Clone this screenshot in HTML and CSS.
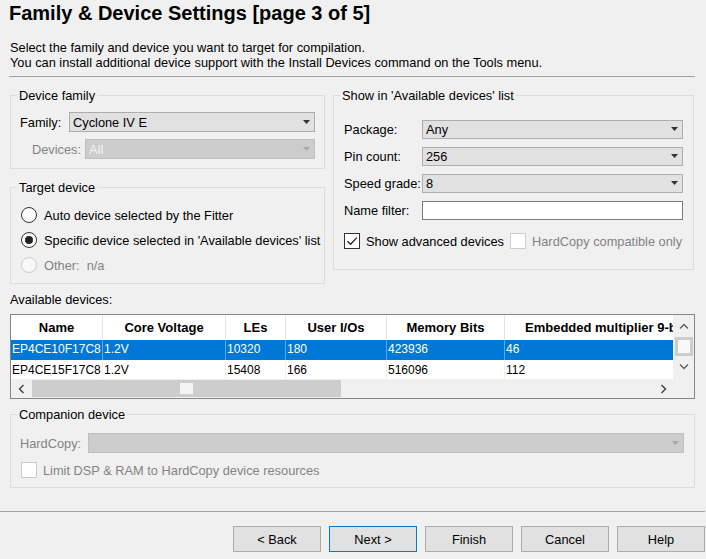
FILE: index.html
```html
<!DOCTYPE html>
<html>
<head>
<meta charset="utf-8">
<link rel="stylesheet" href="styles.css">
</head>
<body>
<div class="page">
  <h1 class="title">Family &amp; Device Settings [page 3 of 5]</h1>
  <p class="desc">Select the family and device you want to target for compilation.<br>You can install additional device support with the Install Devices command on the Tools menu.</p>
  <div class="rule"></div>

  <div class="top">
    <div class="left">
      <fieldset class="group g-family">
        <legend>Device family</legend>
        <div class="inner in-family">
          <div class="row row-family">
            <span class="lbl">Family:</span>
            <div class="combo"><span>Cyclone IV E</span><svg class="arr" width="7" height="4" viewBox="0 0 7 4"><path d="M0 0H7L3.5 4Z"/></svg></div>
          </div>
          <div class="row row-devices">
            <span class="lbl dis">Devices:</span>
            <div class="combo disabled"><span>All</span><svg class="arr" width="7" height="4" viewBox="0 0 7 4"><path d="M0 0H7L3.5 4Z"/></svg></div>
          </div>
        </div>
      </fieldset>

      <fieldset class="group g-target">
        <legend>Target device</legend>
        <div class="inner in-target">
          <div class="opt"><span class="radio"></span><span>Auto device selected by the Fitter</span></div>
          <div class="opt"><span class="radio on"></span><span>Specific device selected in 'Available devices' list</span></div>
          <div class="opt dis"><span class="radio off"></span><span>Other:&nbsp; n/a</span></div>
        </div>
      </fieldset>
    </div>

    <fieldset class="group g-show">
      <legend>Show in 'Available devices' list</legend>
      <div class="inner in-show">
        <div class="frow"><span class="flbl">Package:</span><div class="combo"><span>Any</span><svg class="arr" width="7" height="4" viewBox="0 0 7 4"><path d="M0 0H7L3.5 4Z"/></svg></div></div>
        <div class="frow"><span class="flbl">Pin count:</span><div class="combo"><span>256</span><svg class="arr" width="7" height="4" viewBox="0 0 7 4"><path d="M0 0H7L3.5 4Z"/></svg></div></div>
        <div class="frow"><span class="flbl">Speed grade:</span><div class="combo"><span>8</span><svg class="arr" width="7" height="4" viewBox="0 0 7 4"><path d="M0 0H7L3.5 4Z"/></svg></div></div>
        <div class="frow"><span class="flbl">Name filter:</span><div class="textbox"></div></div>
        <div class="chkrow">
          <span class="chk"><svg width="14" height="14" viewBox="0 0 14 14"><path d="M2.5 7.2L5.6 10.3L11.8 3.6" fill="none" stroke="#222" stroke-width="1.3"/></svg></span>
          <span>Show advanced devices</span>
          <span class="chk off hc"></span>
          <span class="dis">HardCopy compatible only</span>
        </div>
      </div>
    </fieldset>
  </div>

  <div class="avail">Available devices:</div>
  <div class="list">
    <div class="list-main">
      <div class="thead">
        <div class="th">Name</div>
        <div class="th">Core Voltage</div>
        <div class="th">LEs</div>
        <div class="th">User I/Os</div>
        <div class="th">Memory Bits</div>
        <div class="th th-last">Embedded multiplier 9-bit elements</div>
      </div>
      <div class="tr sel">
        <div class="td">EP4CE10F17C8</div>
        <div class="td">1.2V</div>
        <div class="td">10320</div>
        <div class="td">180</div>
        <div class="td">423936</div>
        <div class="td">46</div>
      </div>
      <div class="tr r2">
        <div class="td">EP4CE15F17C8</div>
        <div class="td">1.2V</div>
        <div class="td">15408</div>
        <div class="td">166</div>
        <div class="td">516096</div>
        <div class="td">112</div>
      </div>
    </div>
    <div class="vscroll">
      <div class="sbtn"><svg width="10" height="6" viewBox="0 0 10 6"><path d="M1 5.5L5 1.5L9 5.5" fill="none" stroke="#606060" stroke-width="1.4"/></svg></div>
      <div class="vthumb"></div>
      <div class="sbtn"><svg width="10" height="6" viewBox="0 0 10 6"><path d="M1 0.5L5 4.5L9 0.5" fill="none" stroke="#606060" stroke-width="1.4"/></svg></div>
    </div>
    <div class="hscroll">
      <div class="hbtn"><svg width="6" height="10" viewBox="0 0 6 10"><path d="M5.5 1L1.5 5L5.5 9" fill="none" stroke="#404040" stroke-width="1.4"/></svg></div>
      <div class="htrack"><div class="hthumb"><span class="grip"></span></div></div>
      <div class="hbtn"><svg width="6" height="10" viewBox="0 0 6 10"><path d="M0.5 1L4.5 5L0.5 9" fill="none" stroke="#404040" stroke-width="1.4"/></svg></div>
      <div class="corner"></div>
    </div>
  </div>

  <fieldset class="group g-comp">
    <legend>Companion device</legend>
    <div class="inner in-comp">
      <div class="row row-hc">
        <span class="lbl dis">HardCopy:</span>
        <div class="combo disabled"><span></span><svg class="arr" width="7" height="4" viewBox="0 0 7 4"><path d="M0 0H7L3.5 4Z"/></svg></div>
      </div>
      <div class="chkrow2">
        <span class="chk off"></span>
        <span class="dis">Limit DSP &amp; RAM to HardCopy device resources</span>
      </div>
    </div>
  </fieldset>

  <div class="rule2"></div>
  <div class="buttons">
    <div class="btn">&lt; Back</div>
    <div class="btn def">Next &gt;</div>
    <div class="btn">Finish</div>
    <div class="btn">Cancel</div>
    <div class="btn">Help</div>
  </div>
</div>
</body>
</html>
```

FILE: styles.css
```css
* { box-sizing: border-box; }
html, body { margin: 0; padding: 0; }
body {
  width: 706px;
  height: 559px;
  overflow: hidden;
  background: #f0f0f0;
  font-family: "Liberation Sans", Arial, sans-serif;
  font-size: 12.8px;
  color: #000;
}
.page { display: flex; flex-direction: column; height: 559px; }

.title {
  margin: 0;
  padding-left: 9px;
  font-size: 20px;
  font-weight: bold;
  line-height: 26px;
  height: 26px;
}
.desc { margin: 14px 0 0 10px; line-height: 15px; }
.rule { margin: 6px 11px 0 9px; height: 1px; background: #a0a0a0; }

.top { display: flex; gap: 8px; margin: 11px 0 0 10px; align-items: flex-start; }
.left { width: 315px; display: flex; flex-direction: column; gap: 11px; }

.group {
  margin: 0;
  padding: 0;
  min-width: 0;
  border: 1px solid #dcdcdc;
}
.group legend {
  margin-left: 6px;
  padding: 0 2px;
  line-height: 15px;
  height: 15px;
}

.in-family { padding: 9px 9px 9px 0; }
.row { display: flex; align-items: center; height: 20px; }
.row .combo { flex: 1; }
.row-family { padding-left: 9px; }
.row-family .lbl { width: 49px; }
.row-devices { margin-top: 7px; padding-left: 21px; }
.row-devices .lbl { width: 53px; }
.lbl { white-space: nowrap; flex: none; }
.dis { color: #838383; }

.combo {
  height: 20px;
  background: #e1e1e1;
  border: 1px solid #adadad;
  display: flex;
  align-items: center;
  justify-content: space-between;
  padding: 0 4px 0 3px;
  white-space: nowrap;
}
.combo .arr { fill: #333; flex: none; }
.combo.disabled { background: #cccccc; border-color: #bfbfbf; color: #f4f4f4; }
.combo.disabled .arr { fill: #a8a8a8; }

.in-target { padding: 10px 0 8px 10px; }
.opt { display: flex; align-items: center; gap: 7px; height: 20px; white-space: nowrap; }
.opt + .opt { margin-top: 5px; }
.radio {
  width: 16px; height: 16px;
  border-radius: 50%;
  border: 1px solid #333;
  background: #fff;
  position: relative;
  flex: none;
}
.radio.on::after {
  content: "";
  position: absolute;
  left: 3px; top: 3px;
  width: 8px; height: 8px;
  border-radius: 50%;
  background: #222;
}
.radio.off { border-color: #cccccc; background: #f8f8f8; }

.g-show { width: 361px; }
.in-show { padding: 16px 10px 18px 10px; }
.frow { display: flex; align-items: center; height: 20px; }
.frow + .frow { margin-top: 7px; }
.frow .combo { flex: 1; height: 19px; }
.flbl { width: 78px; flex: none; white-space: nowrap; }
.textbox { flex: 1; height: 19px; background: #fff; border: 1px solid #7a7a7a; }
.chkrow { display: flex; align-items: center; height: 20px; margin-top: 11px; gap: 6px; white-space: nowrap; }
.chk {
  width: 16px; height: 16px;
  border: 1px solid #333;
  background: #fff;
  flex: none;
  display: flex; align-items: center; justify-content: center;
}
.chk.off { border-color: #cccccc; }
.chk.hc { margin-left: 0; }

.avail { margin: 8px 0 0 10px; line-height: 15px; }

.list {
  margin: 7px 0 0 10px;
  width: 685px;
  height: 85px;
  border: 1px solid #828790;
  background: #fff;
  display: grid;
  grid-template-columns: 662px 21px;
  grid-template-rows: 64px 19px;
}
.list-main { overflow: hidden; }
.thead, .tr {
  display: grid;
  grid-template-columns: 92px 123px 60px 101px 118px 168px;
}
.thead { height: 25px; }
.th {
  font-weight: bold;
  font-size: 13px;
  text-align: center;
  line-height: 26px;
  height: 25px;
  border-right: 1px solid #e5e5e5;
  white-space: nowrap;
  overflow: hidden;
}
.th-last { text-align: left; padding-left: 20px; border-right: 0; }
.tr { height: 20px; font-size: 12px; }
.tr.r2 { height: 19px; border-top: 1px solid #fff; }
.td {
  line-height: 19px;
  padding-left: 1px;
  white-space: nowrap;
  overflow: hidden;
  border-right: 1px solid #f0f0f0;
}
.sel { background: #0078d7; color: #fff; }
.sel .td { border-right-color: #5aa6e4; }
.td:last-child { border-right: 0; }

.vscroll {
  background: #f0f0f0;
  display: flex;
  flex-direction: column;
  align-items: center;
}
.sbtn { height: 22px; width: 21px; display: flex; align-items: center; justify-content: center; }
.vthumb {
  width: 18px; height: 19px;
  border: 3px solid #cdcdcd;
  background: #f8f8f8;
}
.hscroll {
  grid-column: 1 / 3;
  background: #f0f0f0;
  display: flex;
  align-items: center;
}
.hbtn { width: 19px; height: 19px; display: flex; align-items: center; justify-content: center; flex: none; }
.htrack { flex: 1; height: 19px; display: flex; align-items: center; padding-left: 2px; }
.hthumb {
  width: 309px; height: 17px;
  background: #cdcdcd;
  display: flex; align-items: center; justify-content: center;
}
.grip { width: 13px; height: 11px; background: #f4f4f4; }
.corner { width: 21px; height: 19px; flex: none; }

.g-comp { margin: 8px 0 0 10px; width: 685px; }
.in-comp { padding: 11px 10px 7px 9px; }
.row-hc .lbl { width: 68px; }
.chkrow2 { display: flex; align-items: center; gap: 6px; height: 20px; margin-top: 7px; padding-left: 1px; }

.rule2 { margin: 23px 1px 0 0; height: 1px; background: #a0a0a0; }
.buttons { display: flex; justify-content: flex-end; gap: 8px; margin: 14px 1px 0 0; }
.btn {
  width: 88px; height: 26px;
  background: #e1e1e1;
  border: 1px solid #adadad;
  display: flex; align-items: center; justify-content: center;
}
.btn.def { border-color: #0078d7; }
```
